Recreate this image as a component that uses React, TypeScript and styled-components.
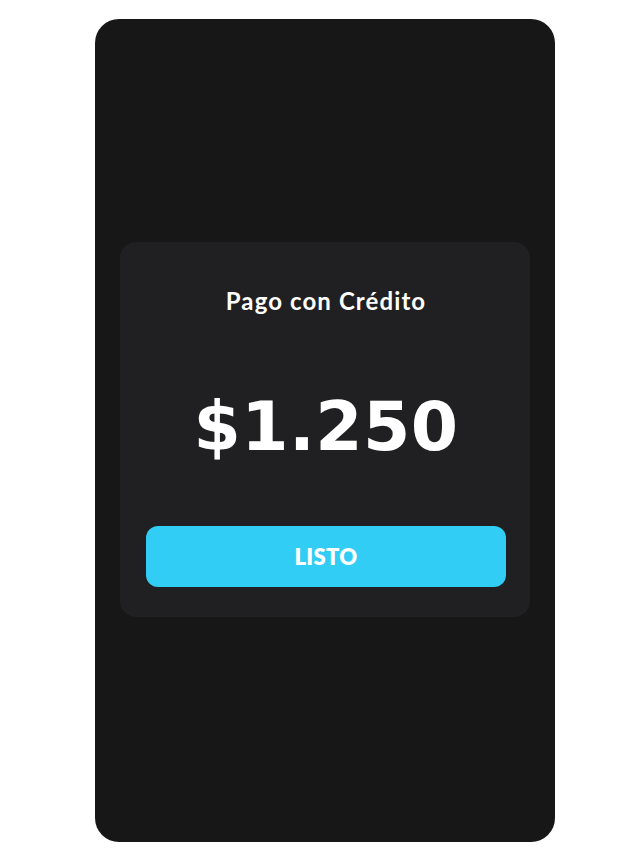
import React from "react";
import styled, { createGlobalStyle } from "styled-components";

const Global = createGlobalStyle`
  html, body { margin: 0; padding: 0; background: #ffffff; }
  body { font-family: "Lato", "Noto Sans", sans-serif; }
`;

const Page = styled.div`
  width: 641px;
  height: 859px;
  display: flex;
  justify-content: center;
  padding-top: 19px;
  box-sizing: border-box;
`;

const Phone = styled.div`
  width: 460px;
  height: 823px;
  margin-left: 9px;
  background: #171717;
  border-radius: 24px;
  display: flex;
  align-items: center;
  justify-content: center;
  padding-bottom: 2px;
  box-sizing: border-box;
`;

const Card = styled.div`
  width: 410px;
  height: 375px;
  background: #202022;
  border-radius: 16px;
  box-sizing: border-box;
  padding: 45px 24px 0 26px;
  display: flex;
  flex-direction: column;
  align-items: center;
`;

const Title = styled.div`
  font-family: "Lato", sans-serif;
  font-weight: 700;
  font-size: 24px;
  letter-spacing: 1.1px;
  color: #ffffff;
  line-height: 28px;
`;

const Amount = styled.div`
  margin-top: 72px;
  font-family: "DejaVu Sans", sans-serif;
  font-weight: 700;
  font-size: 68px;
  line-height: 80px;
  color: #ffffff;
  letter-spacing: 0.4px;
`;

const Button = styled.button`
  margin-top: 59px;
  width: 360px;
  height: 61px;
  border: none;
  border-radius: 12px;
  background: #31cdf4;
  color: #ffffff;
  font-family: "Lato", sans-serif;
  font-weight: 800;
  font-size: 22px;
  letter-spacing: 0.3px;
  cursor: pointer;
`;

export default function App() {
  return (
    <>
      <Global />
      <Page>
        <Phone>
          <Card>
            <Title>Pago con Crédito</Title>
            <Amount>$1.250</Amount>
            <Button>LISTO</Button>
          </Card>
        </Phone>
      </Page>
    </>
  );
}
